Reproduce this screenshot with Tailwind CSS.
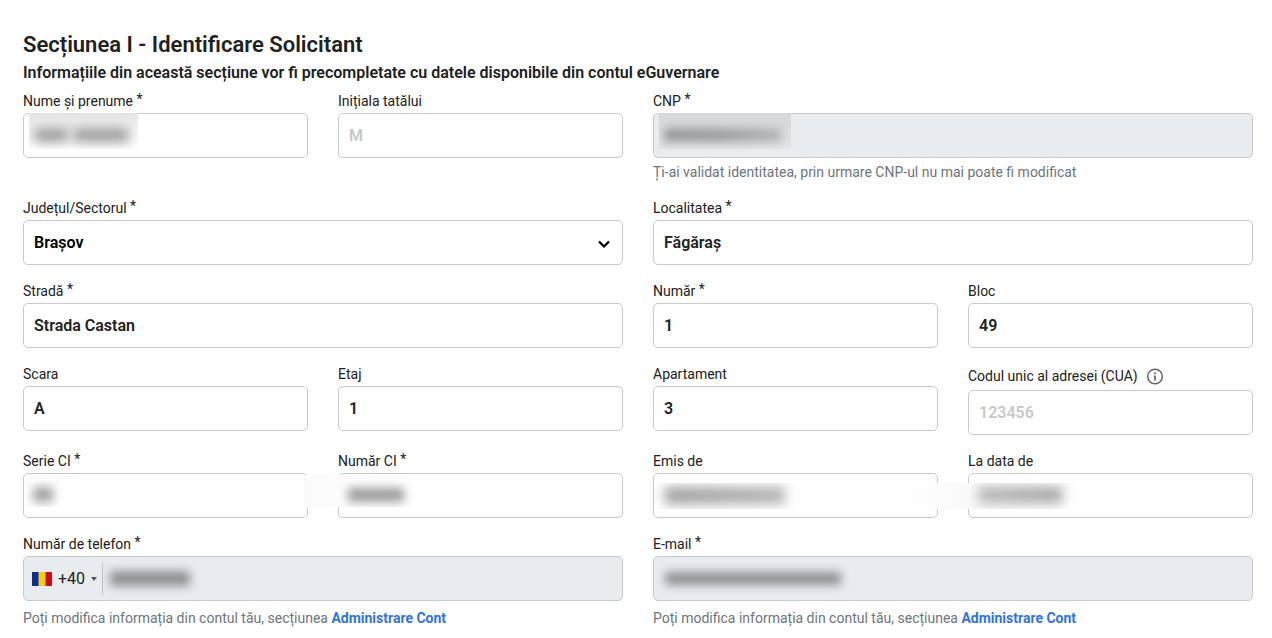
<!DOCTYPE html>
<html lang="ro">
<head>
  <meta charset="UTF-8" />
  <meta name="viewport" content="width=device-width, initial-scale=1.0" />
  <title>Identificare Solicitant</title>
  <script src="https://cdn.jsdelivr.net/npm/@tailwindcss/browser@4"></script>
</head>
<body class="bg-white font-['Roboto',sans-serif] text-[#212121]">
  <form class="pt-[31px] pl-[23px] pr-[19px] pb-[10px]">
    <h1 class="text-[22px] leading-[28px] font-semibold">Secțiunea I - Identificare Solicitant</h1>
    <h2 class="mt-[2px] mb-[6px] text-[16px] leading-[24px] font-semibold">Informațiile din această secțiune vor fi precompletate cu datele disponibile din contul eGuvernare</h2>

    <div class="grid grid-cols-4 gap-x-[30px] gap-y-[16px] items-start">
      <div>
        <label for="nume" class="block mb-[1px] text-[14px] leading-[21px]">Nume și prenume <span class="relative -top-[2px]">*</span></label>
        <div class="relative">
          <input id="nume" type="text" class="block w-full h-[45px] rounded-[5px] border border-[#c9c9c9] px-[10px] text-[16px] font-semibold" />
          <!-- redacted value -->
          <div class="absolute left-[6px] top-0 w-[109px] h-[36px] overflow-hidden bg-linear-to-b from-[#e4e4e4] via-[#f8f8f8] to-white pointer-events-none">
            <span class="absolute left-[5px] top-[15px] w-[34px] h-[14px] bg-[#9a9a9a] blur-[6px]"></span>
            <span class="absolute left-[44px] top-[15px] w-[56px] h-[14px] bg-[#9a9a9a] blur-[6px]"></span>
          </div>
        </div>
      </div>
      <div>
        <label for="initiala" class="block mb-[1px] text-[14px] leading-[21px]">Inițiala tatălui</label>
        <input id="initiala" type="text" placeholder="M" class="block w-full h-[45px] rounded-[5px] border border-[#c9c9c9] px-[10px] text-[16px] font-semibold placeholder:text-[#c8c8c8]" />
      </div>
      <div class="col-span-2">
        <label for="cnp" class="block mb-[1px] text-[14px] leading-[21px]">CNP <span class="relative -top-[2px]">*</span></label>
        <div class="relative">
          <input id="cnp" type="text" disabled class="block w-full h-[45px] rounded-[5px] border border-[#c9c9c9] bg-[#e8ecef] px-[10px] text-[16px] font-semibold" />
          <div class="absolute left-[6px] top-0 w-[132px] h-[36px] overflow-hidden bg-linear-to-b from-[#d6d7d9] to-[#e3e6e8] pointer-events-none">
            <span class="absolute left-[5px] top-[15px] w-[118px] h-[14px] bg-linear-to-r from-[#97989a] via-[#9c9d9f] to-[#b4b6b8] blur-[5px]"></span>
          </div>
        </div>
        <p class="mt-[4px] text-[14px] leading-[20px] text-[#6c757d]">Ți-ai validat identitatea, prin urmare CNP-ul nu mai poate fi modificat</p>
      </div>

      <div class="col-span-2">
        <label for="judet" class="block mb-[1px] text-[14px] leading-[21px]">Județul/Sectorul <span class="relative -top-[2px]">*</span></label>
        <div class="relative">
          <select id="judet" class="block w-full h-[45px] appearance-none rounded-[5px] border border-[#c9c9c9] bg-white px-[10px] text-[16px] font-semibold text-black">
            <option>Brașov</option>
          </select>
          <svg class="absolute right-[12px] top-[18px] w-[14px] h-[12px] pointer-events-none" viewBox="0 0 14 12" fill="none" stroke="#000" stroke-width="2.2"><path d="M2 3.5 7 8.5 12 3.5" /></svg>
        </div>
      </div>
      <div class="col-span-2">
        <label for="localitate" class="block mb-[1px] text-[14px] leading-[21px]">Localitatea <span class="relative -top-[2px]">*</span></label>
        <input id="localitate" type="text" value="Făgăraș" class="block w-full h-[45px] rounded-[5px] border border-[#c9c9c9] px-[10px] text-[16px] font-semibold" />
      </div>

      <div class="col-span-2">
        <label for="strada" class="block mb-[1px] text-[14px] leading-[21px]">Stradă <span class="relative -top-[2px]">*</span></label>
        <input id="strada" type="text" value="Strada Castan" class="block w-full h-[45px] rounded-[5px] border border-[#c9c9c9] px-[10px] text-[16px] font-semibold" />
      </div>
      <div>
        <label for="numar" class="block mb-[1px] text-[14px] leading-[21px]">Număr <span class="relative -top-[2px]">*</span></label>
        <input id="numar" type="text" value="1" class="block w-full h-[45px] rounded-[5px] border border-[#c9c9c9] px-[10px] text-[16px] font-semibold" />
      </div>
      <div>
        <label for="bloc" class="block mb-[1px] text-[14px] leading-[21px]">Bloc</label>
        <input id="bloc" type="text" value="49" class="block w-full h-[45px] rounded-[5px] border border-[#c9c9c9] px-[10px] text-[16px] font-semibold" />
      </div>

      <div>
        <label for="scara" class="block mb-[1px] text-[14px] leading-[21px]">Scara</label>
        <input id="scara" type="text" value="A" class="block w-full h-[45px] rounded-[5px] border border-[#c9c9c9] px-[10px] text-[16px] font-semibold" />
      </div>
      <div>
        <label for="etaj" class="block mb-[1px] text-[14px] leading-[21px]">Etaj</label>
        <input id="etaj" type="text" value="1" class="block w-full h-[45px] rounded-[5px] border border-[#c9c9c9] px-[10px] text-[16px] font-semibold" />
      </div>
      <div>
        <label for="apartament" class="block mb-[1px] text-[14px] leading-[21px]">Apartament</label>
        <input id="apartament" type="text" value="3" class="block w-full h-[45px] rounded-[5px] border border-[#c9c9c9] px-[10px] text-[16px] font-semibold" />
      </div>
      <div>
        <div class="mb-[1px] flex h-[25px] items-center gap-[8px]">
          <label for="cua" class="text-[14px] leading-[21px]">Codul unic al adresei (CUA)</label>
          <button type="button" aria-label="Informații CUA">
            <svg class="block w-[18px] h-[18px]" viewBox="0 0 18 18" fill="none" stroke="#666" stroke-width="1.5"><circle cx="9" cy="8.500" r="7.3" /><path d="M9 7.500v5M9 4.500v1.7" stroke-width="1.8" /></svg>
          </button>
        </div>
        <input id="cua" type="text" placeholder="123456" class="block w-full h-[45px] rounded-[5px] border border-[#c9c9c9] px-[10px] text-[16px] font-semibold placeholder:text-[#c8c8c8]" />
      </div>

      <div>
        <label for="serie" class="block mb-[1px] text-[14px] leading-[21px]">Serie CI <span class="relative -top-[2px]">*</span></label>
        <div class="relative">
          <input id="serie" type="text" class="block w-full h-[45px] rounded-[5px] border border-[#c9c9c9] px-[10px] text-[16px] font-semibold" />
          <div class="absolute left-[2px] top-[2px] w-[60px] h-[32px] overflow-hidden bg-[#fefefe] pointer-events-none">
            <span class="absolute left-[8px] top-[12px] w-[20px] h-[15px] bg-[#a4a4a4] blur-[5px]"></span>
          </div>
        </div>
      </div>
      <div>
        <label for="numarci" class="block mb-[1px] text-[14px] leading-[21px]">Număr CI <span class="relative -top-[2px]">*</span></label>
        <div class="relative">
          <input id="numarci" type="text" class="block w-full h-[45px] rounded-[5px] border border-[#c9c9c9] px-[10px] text-[16px] font-semibold" />
          <div class="absolute -left-[34px] top-[2px] w-[120px] h-[32px] overflow-hidden bg-linear-to-r from-[#fbfbfb] to-white pointer-events-none">
            <span class="absolute left-[44px] top-[13px] w-[56px] h-[14px] bg-[#9c9c9c] blur-[5px]"></span>
          </div>
        </div>
      </div>
      <div>
        <label for="emis" class="block mb-[1px] text-[14px] leading-[21px]">Emis de</label>
        <div class="relative">
          <input id="emis" type="text" class="block w-full h-[45px] rounded-[5px] border border-[#c9c9c9] px-[10px] text-[16px] font-semibold" />
          <div class="absolute left-[2px] top-[10px] w-[158px] h-[26px] overflow-hidden bg-[#fefefe] pointer-events-none">
            <span class="absolute left-[10px] top-[4px] w-[120px] h-[17px] bg-linear-to-r from-[#a0a0a0] to-[#b4b4b4] blur-[6px]"></span>
          </div>
        </div>
      </div>
      <div>
        <label for="data" class="block mb-[1px] text-[14px] leading-[21px]">La data de</label>
        <div class="relative">
          <input id="data" type="text" class="block w-full h-[45px] rounded-[5px] border border-[#c9c9c9] px-[10px] text-[16px] font-semibold" />
          <div class="absolute -left-[64px] top-[10px] w-[190px] h-[26px] overflow-hidden bg-linear-to-r from-[#fefefe] via-[#f8f8f8] to-white pointer-events-none">
            <span class="absolute left-[74px] top-[4px] w-[84px] h-[16px] bg-linear-to-r from-[#b8b8b8] to-[#a4a4a4] blur-[6px]"></span>
          </div>
        </div>
      </div>

      <div class="col-span-2">
        <label for="telefon" class="block mb-[1px] text-[14px] leading-[21px]">Număr de telefon <span class="relative -top-[2px]">*</span></label>
        <div class="relative flex h-[45px] items-center rounded-[5px] border border-[#c9c9c9] bg-[#e8ecef]">
          <button type="button" disabled class="flex h-[33px] items-center gap-[6px] border-r border-[#c0c3c5] pl-[8px] pr-[5px] text-[16px]">
            <svg class="w-[20px] h-[14px]" viewBox="0 0 20 14"><path fill="#0f2f8c" d="M0 0h7v14H0z" /><path fill="#fccf05" d="M6.500 0h7v14h-7z" /><path fill="#cb0a24" d="M13.500 0H20v14h-6.500z" /></svg>
            <span>+40</span>
            <svg class="w-[6px] h-[4px]" viewBox="0 0 6 4"><path fill="#555" d="M0 0h6L3 4z" /></svg>
          </button>
          <input id="telefon" type="tel" disabled class="h-full min-w-0 flex-1 px-[6px] text-[16px] font-semibold" />
          <span class="absolute left-[86px] top-[14px] w-[80px] h-[15px] bg-[#8e9092] blur-[5px] pointer-events-none"></span>
        </div>
        <p class="mt-[7px] text-[14px] leading-[20px] text-[#6c757d]">Poți modifica informația din contul tău, secțiunea <a href="#" class="font-bold text-[#3073dc]">Administrare Cont</a></p>
      </div>
      <div class="col-span-2">
        <label for="email" class="block mb-[1px] text-[14px] leading-[21px]">E-mail <span class="relative -top-[2px]">*</span></label>
        <div class="relative">
          <input id="email" type="email" disabled class="block w-full h-[45px] rounded-[5px] border border-[#c9c9c9] bg-[#e8ecef] px-[10px] text-[16px] font-semibold" />
          <span class="absolute left-[12px] top-[16px] w-[176px] h-[13px] bg-[#8e9092] blur-[5px] pointer-events-none"></span>
        </div>
        <p class="mt-[7px] text-[14px] leading-[20px] text-[#6c757d]">Poți modifica informația din contul tău, secțiunea <a href="#" class="font-bold text-[#3073dc]">Administrare Cont</a></p>
      </div>
    </div>
  </form>
</body>
</html>
